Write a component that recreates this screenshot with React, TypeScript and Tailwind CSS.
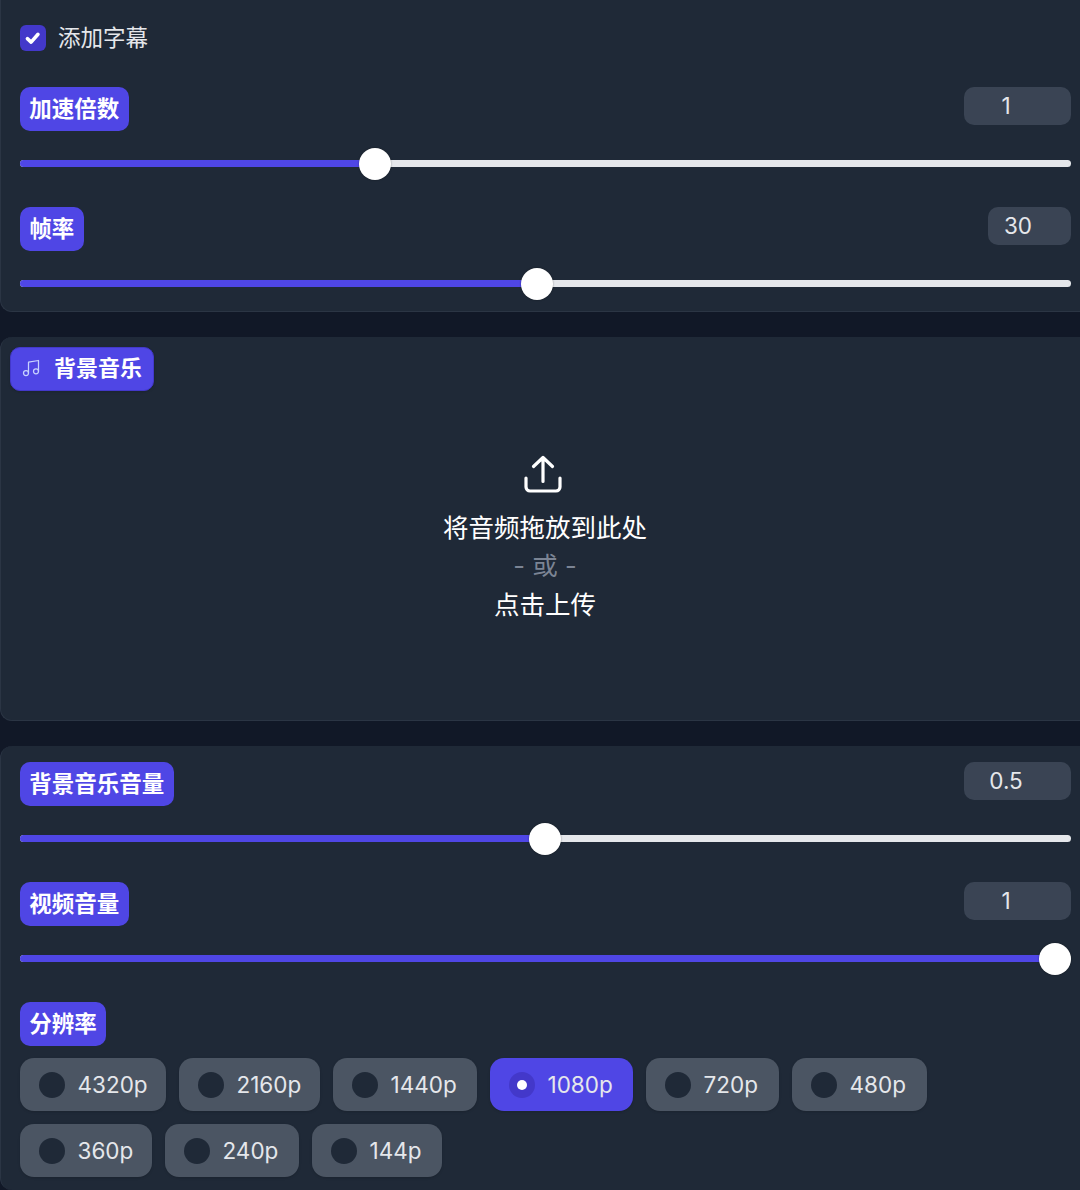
import React from 'react';
import { Music } from 'lucide-react';

const FONT = 'font-["Inter","Noto_Sans_CJK_SC",sans-serif]';

const Badge: React.FC<{ text: string }> = ({ text }) => (
  <span className="inline-flex h-[44px] items-center rounded-[10px] bg-[#4f46e5] px-[9.25px] text-[22.5px] font-semibold leading-none text-white">
    {text}
  </span>
);

// pct is where the thumb sits between both ends of its travel
const Slider: React.FC<{ label: string; value: string; pct: number; wide?: boolean }> = ({ label, value, pct, wide }) => {
  const center = `calc(16px + (100% - 32px) * ${pct})`;
  return (
    <div className="flex flex-col">
      <div className="flex items-start justify-between">
        <Badge text={label} />
        <div className={`flex h-[38px] items-center justify-center rounded-[10px] bg-[#3a4454] pr-[23px] text-[22.5px] text-[#e5e7eb] ${wide ? 'w-[107px]' : 'w-[83px]'}`}>
          {value}
        </div>
      </div>
      <div className="relative mt-[29px] h-[7px] rounded-full bg-[#e5e7eb]">
        <div className="h-full rounded-full bg-[#4f46e5]" style={{ width: center }} />
        <div
          className="absolute top-[-12px] h-[32px] w-[32px] -translate-x-1/2 rounded-full bg-white shadow-[0_0_2px_rgba(0,0,0,0.4)]"
          style={{ left: center }}
        />
      </div>
    </div>
  );
};

const Radio: React.FC<{ label: string; width: string; active?: boolean }> = ({ label, width, active }) => (
  <div className={`flex h-[53px] items-center gap-[12.5px] rounded-[14px] pl-[19px] text-[22.5px] text-[#e5e7eb] shadow-sm ${width} ${active ? 'bg-[#4f46e5]' : 'bg-[#4b5563]'}`}>
    <span className={`flex h-[26px] w-[26px] shrink-0 items-center justify-center rounded-full ${active ? 'bg-[#4338ca]' : 'bg-[#1f2937]'}`}>
      {active && <span className="h-[10px] w-[10px] rounded-full bg-white" />}
    </span>
    {label}
  </div>
);

export default function App() {
  return (
    <div className={`flex h-[1190px] w-[1080px] flex-col gap-[25px] overflow-hidden bg-[#111827] ${FONT}`}>
      <section className="flex h-[312px] shrink-0 flex-col rounded-bl-xl border-b border-l border-[#2b3544] bg-[#1f2937] pl-[19px] pr-[9px]">
        <label className="mt-[25px] flex h-[26px] items-center gap-[12px] text-[22.5px] text-[#e5e7eb]">
          <span className="flex h-[26px] w-[26px] items-center justify-center rounded-[6px] bg-[#4338ca]">
            <svg viewBox="0 0 16 16" className="h-[20px] w-[20px]" fill="none" stroke="white" strokeWidth="2.8" strokeLinecap="round" strokeLinejoin="round">
              <path d="M3.5 8.5l3 2.8 5.5-6.3" />
            </svg>
          </span>
          添加字幕
        </label>
        <div className="mt-[36px] flex flex-col gap-[40px]">
          <Slider label="加速倍数" value="1" pct={0.3327} wide />
          <Slider label="帧率" value="30" pct={0.4917} />
        </div>
      </section>

      <section className="flex h-[384px] shrink-0 flex-col rounded-l-xl border-b border-l border-[#2b3544] bg-[#1f2937] pl-[9px] pt-[10px]">
        <div className="flex h-[44px] w-[144px] items-center gap-[13px] rounded-[10px] border border-[#4338ca] bg-[#4f46e5] pb-[2px] pl-[10px] text-[22px] font-semibold text-white shadow-sm">
          <Music size={20} strokeWidth={1.5} className="text-[#c7d2fe]" />
          背景音乐
        </div>
        <div className="mt-[63px] flex flex-col items-center text-[25.5px] leading-[38px] text-white">
          <svg viewBox="0 0 40 40" className="mr-[4px] h-[40px] w-[40px]" fill="none" stroke="white" strokeWidth="3.2" strokeLinecap="round" strokeLinejoin="round">
            <path d="M20 3.5v24M10.5 12.5L20 3.5l9.5 9" />
            <path d="M3 24v9a4 4 0 0 0 4 4h26a4 4 0 0 0 4-4v-9" />
          </svg>
          <div className="mt-[15px]">将音频拖放到此处</div>
          <div className="text-[#7b8494]">- 或 -</div>
          <div className="pt-[1px]">点击上传</div>
        </div>
      </section>

      <section className="flex h-[444px] shrink-0 flex-col rounded-l-xl border-l border-[#2b3544] bg-[#1f2937] pl-[19px] pr-[9px] pt-[16px]">
        <div className="flex flex-col gap-[40px]">
          <Slider label="背景音乐音量" value="0.5" pct={0.4995} wide />
          <Slider label="视频音量" value="1" pct={1} wide />
        </div>
        <div className="mt-[40px] flex">
          <Badge text="分辨率" />
        </div>
        <div className="mt-[12px] flex flex-wrap gap-x-[13px] gap-y-[13px]">
          <Radio label="4320p" width="w-[146px]" />
          <Radio label="2160p" width="w-[141px]" />
          <Radio label="1440p" width="w-[144px]" />
          <Radio label="1080p" width="w-[143px]" active />
          <Radio label="720p" width="w-[133px]" />
          <Radio label="480p" width="w-[135px]" />
          <Radio label="360p" width="w-[132px]" />
          <Radio label="240p" width="w-[134px]" />
          <Radio label="144p" width="w-[130px]" />
        </div>
      </section>
    </div>
  );
}
